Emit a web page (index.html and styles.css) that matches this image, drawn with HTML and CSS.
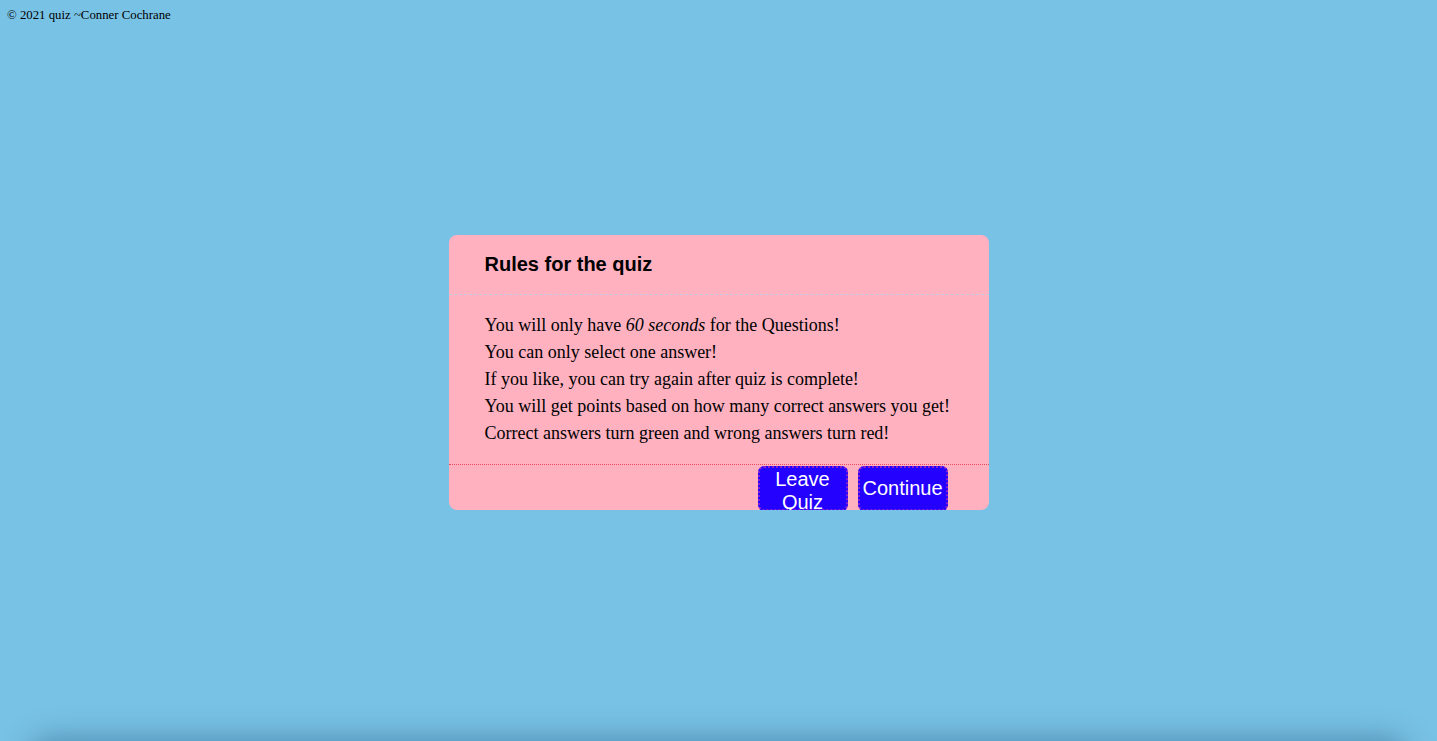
FILE: index.html
```html
<!DOCTYPE html>
<html>
<head>
<meta charset="utf-8">
<link rel="stylesheet" href="styles.css">
</head>
<body>
<p class="copyright">© 2021 quiz ~Conner Cochrane</p>
<div class="card">
  <div class="card-header">Rules for the quiz</div>
  <div class="card-body">
    <div>You will only have <em>60 seconds</em> for the Questions!</div>
    <div>You can only select one answer!</div>
    <div>If you like, you can try again after quiz is complete!</div>
    <div>You will get points based on how many correct answers you get!</div>
    <div>Correct answers turn green and wrong answers turn red!</div>
  </div>
  <div class="card-footer">
    <button class="btn">Leave Quiz</button>
    <button class="btn">Continue</button>
  </div>
</div>
<div class="bottom-shade"></div>
</body>
</html>
```
FILE: styles.css
```css
html, body {
  margin: 0;
  padding: 0;
}
body {
  background: #78c2e5;
  font-family: "Liberation Serif", "Times New Roman", serif;
  height: 100vh;
  overflow: hidden;
}
.copyright {
  margin: 0;
  padding: 8px 0 0 7px;
  font-size: 12.8px;
  line-height: 15px;
  color: #000;
}
.card {
  width: 540px;
  margin: 212px auto 0;
  background: #ffb1c0;
  border-radius: 8px;
  overflow: hidden;
  height: 275px;
}
.card-header {
  height: 60px;
  box-sizing: border-box;
  padding: 18px 36px 0;
  font-family: "Liberation Sans", Arial, sans-serif;
  font-weight: bold;
  font-size: 20px;
  line-height: 23px;
  border-bottom: 1px dashed #c6cce4;
}
.card-body {
  padding: 17px 20px 0 36px;
  height: 169px;
  box-sizing: border-box;
  font-size: 18px;
  line-height: 27px;
  white-space: nowrap;
}
.card-footer {
  border-top: 1px dotted #e84a5c;
  padding: 1px 41px 0 0;
  display: flex;
  justify-content: flex-end;
  gap: 10px;
}
.btn {
  width: 90px;
  height: 45px;
  box-sizing: border-box;
  background: #2400ff;
  color: #fff;
  border: 2px dotted #8a1fd0;
  border-radius: 6px;
  font-family: "Liberation Sans", Arial, sans-serif;
  font-size: 20px;
  line-height: 23px;
  padding: 0;
  overflow: visible;
}
.bottom-shade {
  position: fixed;
  left: 30px;
  right: 30px;
  top: 100%;
  height: 40px;
  border-radius: 30px;
  box-shadow: 0 -2px 30px rgba(0, 40, 80, 0.35);
}
```
